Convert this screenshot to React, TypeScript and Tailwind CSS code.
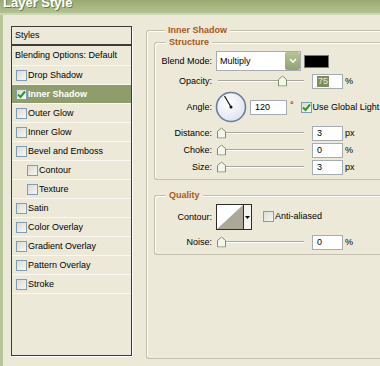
import React from "react";

const FONT = "font-['Liberation_Sans',Arial,sans-serif]";

function Check({ checked = false }: { checked?: boolean }) {
  return (
    <span className="relative flex h-[11px] w-[11px] shrink-0 items-center justify-center border border-[#7f9db9] bg-gradient-to-br from-[#dcdad0] to-[#f8f8f4]">
      {checked && (
        <svg width="9" height="9" viewBox="0 0 9 9">
          <path d="M1 4.5 L3.5 7 L8 1.5" fill="none" stroke="#21a121" strokeWidth="2" />
        </svg>
      )}
    </span>
  );
}

function Thumb() {
  return (
    <svg width="9" height="11" viewBox="0 0 9 11">
      <path d="M0.5 4 L4.5 0.5 L8.5 4 L8.5 10.5 L0.5 10.5 Z" fill="#f4f6ee" stroke="#7d9169" />
    </svg>
  );
}

function Slider({ at }: { at: number }) {
  return (
    <div className="relative h-full w-[90px] shrink-0">
      <div className="absolute left-[2px] right-[2px] top-1/2 h-[2px] -translate-y-1/2 border-t border-[#a7a6a0] bg-white" />
      <div className="absolute top-1/2 -translate-y-1/2" style={{ left: at }}>
        <Thumb />
      </div>
    </div>
  );
}

function Field({ value, w = 31, selected = false }: { value: string; w?: number; selected?: boolean }) {
  return (
    <div
      className="flex h-[15px] shrink-0 items-center border border-[#a5acb5] bg-white pl-[4px]"
      style={{ width: w }}
    >
      {selected ? <span className="bg-[#7f8d5e] px-[1px] text-[#e8ecd8]">{value}</span> : value}
    </div>
  );
}

function Label({ children }: { children: React.ReactNode }) {
  return <div className="w-[57px] shrink-0 text-right">{children}</div>;
}

function SliderRow({
  label,
  value,
  unit,
  at,
  className,
  selected = false,
}: {
  label: string;
  value: string;
  unit: string;
  at: number;
  className: string;
  selected?: boolean;
}) {
  return (
    <div className={`flex h-[16px] items-center ${className}`}>
      <Label>{label}</Label>
      <div className="ml-[4px] flex h-full items-center">
        <Slider at={at} />
      </div>
      <div className="ml-[6px]">
        <Field value={value} selected={selected} />
      </div>
      <span className="ml-[2px]">{unit}</span>
    </div>
  );
}

const items: { name: string; indent?: boolean; checked?: boolean }[] = [
  { name: "Drop Shadow" },
  { name: "Inner Shadow", checked: true },
  { name: "Outer Glow" },
  { name: "Inner Glow" },
  { name: "Bevel and Emboss" },
  { name: "Contour", indent: true },
  { name: "Texture", indent: true },
  { name: "Satin" },
  { name: "Color Overlay" },
  { name: "Gradient Overlay" },
  { name: "Pattern Overlay" },
  { name: "Stroke" },
];

// group boxes run off the right edge of the window, so no right border
const fieldset = "rounded-l-[3px] border border-r-0 border-[#c3c0ae] shadow-[inset_1px_1px_0_#ffffff]";
const legend = "ml-[11px] bg-[#ece9d8] px-[3px] text-[9px] font-bold leading-[11px] text-[#b0561b]";

export default function App() {
  return (
    <div className={`flex h-[366px] w-[380px] flex-col overflow-hidden bg-[#ece9d8] text-[9px] leading-[11px] text-black ${FONT}`}>
      {/* Title bar */}
      <div className="h-[13px] shrink-0 overflow-hidden bg-gradient-to-b from-[#98aa72] to-[#b3c28f]">
        <div className="-mt-[5px] pl-[3px] text-[13px] font-bold leading-[16px] text-white [text-shadow:1px_1px_0_#6d7d4f]">
          Layer Style
        </div>
      </div>
      <div className="h-[2px] shrink-0 bg-[#cbd6b2]" />

      <div className="flex min-h-0 flex-1">
        <div className="w-[3px] shrink-0 bg-[#b7c69a]" />

        {/* Styles list */}
        <div className="ml-[8px] mt-[11px] flex h-[330px] w-[121px] shrink-0 flex-col border border-[#3c3c38] shadow-[1px_1px_0_#ffffff]">
          <div className="flex h-[19px] shrink-0 items-center border-b-2 border-[#3c3c38] pl-[3px]">Styles</div>
          <div className="flex h-[20px] shrink-0 items-center border-b border-[#faf8f0] pl-[3px]">Blending Options: Default</div>
          {items.map((it) => (
            <div
              key={it.name}
              className={`flex h-[19px] shrink-0 items-center border-b border-[#faf8f0] ${it.indent ? "pl-[15px]" : "pl-[4px]"} ${
                it.checked ? "bg-[#8f9c6b] font-bold text-white" : ""
              }`}
            >
              <Check checked={it.checked} />
              <span className="ml-[1px]">{it.name}</span>
            </div>
          ))}
        </div>

        {/* Right side */}
        <div className="ml-[14px] mt-[10px] w-[320px] shrink-0">
          <fieldset className={`${fieldset} h-[334px] pl-[7px]`}>
            <legend className={legend}>Inner Shadow</legend>

            <fieldset className={`${fieldset} mt-[1px] pb-[4px] pt-[3px]`}>
              <legend className={legend}>Structure</legend>

              <div className="flex h-[20px] items-center">
                <Label>Blend Mode:</Label>
                <div className="ml-[4px] flex h-[20px] w-[85px] items-center justify-between border border-[#a5acb5] bg-white pl-[3px]">
                  <span>Multiply</span>
                  <div className="flex h-[18px] w-[15px] items-center justify-center rounded-[2px] bg-gradient-to-b from-[#b7c49a] to-[#93a271]">
                    <svg width="8" height="6" viewBox="0 0 8 6">
                      <path d="M1 1 L4 4 L7 1" fill="none" stroke="#ffffff" strokeWidth="1.6" />
                    </svg>
                  </div>
                </div>
                <div className="ml-[3px] h-[13px] w-[25px] border border-[#7a7a72] bg-black" />
              </div>

              <SliderRow label="Opacity:" value="75" unit="%" at={62} className="mt-[2px]" selected />

              <div className="mt-[2px] flex h-[32px] items-center">
                <Label>Angle:</Label>
                <div className="ml-[3px]">
                  <svg width="32" height="32" viewBox="0 0 32 32">
                    <defs>
                      <radialGradient id="dial" cx="0.4" cy="0.35" r="0.7">
                        <stop offset="0" stopColor="#ffffff" />
                        <stop offset="1" stopColor="#dfe3ee" />
                      </radialGradient>
                    </defs>
                    <circle cx="16" cy="16" r="14.5" fill="url(#dial)" stroke="#6a7d9d" strokeWidth="1.6" />
                    <line x1="16" y1="16" x2="9.5" y2="5" stroke="#111" strokeWidth="1.2" />
                    <circle cx="16" cy="16" r="1.5" fill="#111" />
                  </svg>
                </div>
                <div className="ml-[3px]">
                  <Field value="120" w={37} />
                </div>
                <span className="ml-[3px] self-start pt-[9px]">°</span>
                <div className="ml-[7px] flex items-center">
                  <Check checked />
                  <span className="ml-[1px] whitespace-nowrap">Use Global Light</span>
                </div>
              </div>

              <SliderRow label="Distance:" value="3" unit="px" at={1} className="mt-[2px]" />
              <SliderRow label="Choke:" value="0" unit="%" at={1} className="mt-[1px]" />
              <SliderRow label="Size:" value="3" unit="px" at={1} className="mt-[1px]" />
            </fieldset>

            <fieldset className={`${fieldset} mt-[10px] pb-[4px] pt-[3px]`}>
              <legend className={legend}>Quality</legend>

              <div className="flex h-[26px] items-center">
                <Label>Contour:</Label>
                <div className="ml-[4px] flex h-[26px] w-[36px] border border-[#2c2c2c] bg-white">
                  <svg width="26" height="24" viewBox="0 0 26 24" className="shrink-0">
                    <path d="M0 24 L26 0 L26 24 Z" fill="#aca899" />
                  </svg>
                  <div className="flex flex-1 items-center justify-center border-l border-[#2c2c2c] bg-[#f4f3ee]">
                    <svg width="5" height="3" viewBox="0 0 5 3">
                      <path d="M0 0 L5 0 L2.5 3 Z" fill="#000" />
                    </svg>
                  </div>
                </div>
                <div className="ml-[11px] flex items-center self-start pt-[7px]">
                  <Check />
                  <span className="ml-[1px]">Anti-aliased</span>
                </div>
              </div>

              <SliderRow label="Noise:" value="0" unit="%" at={1} className="mt-[4px]" />
            </fieldset>
          </fieldset>
        </div>
      </div>
    </div>
  );
}
